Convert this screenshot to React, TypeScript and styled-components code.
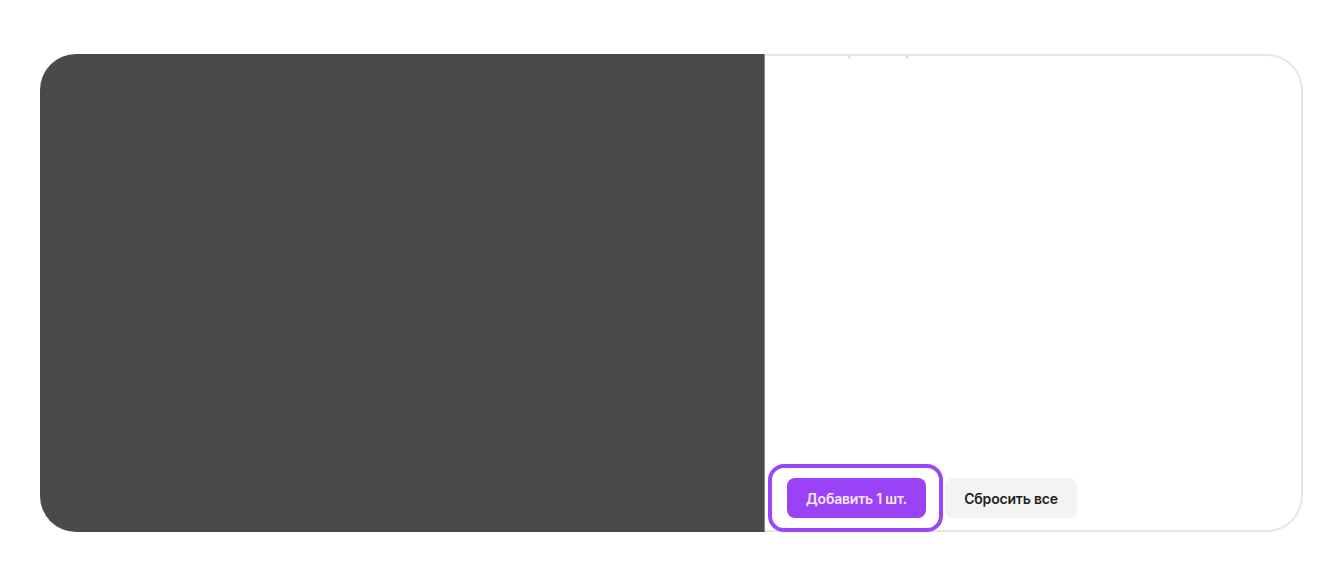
import { FC } from "react";
import styled, { createGlobalStyle } from "styled-components";

const GlobalStyle = createGlobalStyle`
    html, body {
        margin: 0;
        padding: 0;
        background: #ffffff;
        font-family: Inter, "Noto Sans", "Liberation Sans", sans-serif;
    }
    * {
        box-sizing: border-box;
    }
`;

const Page = styled.div`
    padding: 54px 41px 0 40px;
`;

const Card = styled.div`
    display: grid;
    grid-template-columns: 725px 1fr;
    height: 478px;
`;

const Preview = styled.div`
    background-color: #4a4a4a;
    border-radius: 36px 0 0 36px;
    border-right: 1px solid #8a8a8a;
`;

const Panel = styled.div`
    display: flex;
    flex-direction: column;
    background-color: #ffffff;
    border: 2px solid #e6e6e6;
    border-left: none;
    border-radius: 0 36px 36px 0;
`;

const Content = styled.div`
    flex: 1;
    overflow: hidden;
    padding-left: 59px;
`;

const ClippedTitle = styled.div`
    margin-top: -12px;
    font-size: 12px;
    line-height: 15px;
    color: #b8b8b8;
`;

const Footer = styled.div`
    display: flex;
    align-items: center;
    gap: 2px;
    padding-left: 3px;
    margin-bottom: -2px;
`;

const FocusRing = styled.div`
    display: flex;
    padding: 10px 13px 10px 15px;
    border: 4px solid #9a48f7;
    border-radius: 16px;
`;

const Button = styled.button<{ $primary?: boolean }>`
    height: 40px;
    border: none;
    border-radius: 8px;
    font-family: Inter, "Noto Sans", "Liberation Sans", sans-serif;
    font-size: 14px;
    font-weight: 600;
    letter-spacing: -0.2px;
    cursor: pointer;
    background-color: ${({ $primary }) => ($primary ? "#9c42f6" : "#f3f3f3")};
    color: ${({ $primary }) => ($primary ? "#f3e9ff" : "#1f1f1f")};
    width: ${({ $primary }) => ($primary ? "139px" : "132px")};
`;

const App: FC = () => {
    return (
        <Page>
            <GlobalStyle />
            <Card>
                <Preview />
                <Panel>
                    <Content>
                        <ClippedTitle>Выбрано товаров: 1 шт. из 12</ClippedTitle>
                    </Content>
                    <Footer>
                        <FocusRing>
                            <Button $primary>Добавить 1 шт.</Button>
                        </FocusRing>
                        <Button>Сбросить все</Button>
                    </Footer>
                </Panel>
            </Card>
        </Page>
    );
};

export default App;
